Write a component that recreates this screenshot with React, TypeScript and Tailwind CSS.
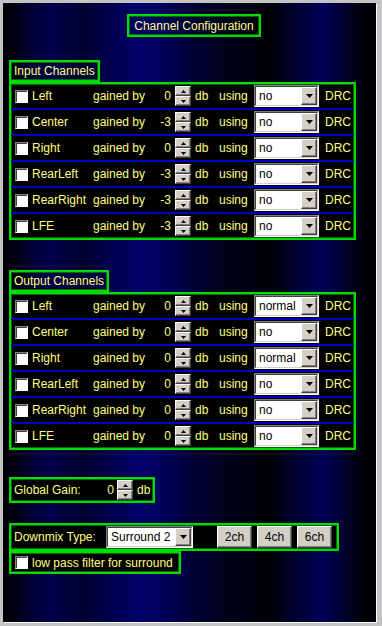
import React from "react";

const GREEN = "border-2 border-[#00dc00] shadow-[inset_0_0_0_1px_#006a00]";
const RAISED =
  "border border-t-white border-l-white border-r-[#404040] border-b-[#404040] bg-[#d4d0c8] shadow-[inset_-1px_-1px_0_#808080]";

function Checkbox() {
  return (
    <div className="w-[13px] h-[13px] shrink-0 border border-t-[#808080] border-l-[#808080] border-r-white border-b-white bg-white shadow-[inset_1px_1px_0_#404040]" />
  );
}

function DownTri() {
  return (
    <svg width="7" height="4" viewBox="0 0 7 4">
      <path d="M0 0h7L3.5 4z" fill="#000" />
    </svg>
  );
}

function Select({ value, w }: { value: string; w: string }) {
  return (
    <div
      className={`${w} h-[22px] shrink-0 border border-t-[#808080] border-l-[#808080] border-r-white border-b-white`}
    >
      <div className="w-full h-full border border-t-[#404040] border-l-[#404040] border-r-[#d4d0c8] border-b-[#d4d0c8] bg-white flex items-center">
        <span className="flex-1 pl-[3px] text-black text-[12px] leading-none">{value}</span>
        <div className={`w-[16px] h-full ${RAISED} flex items-center justify-center`}>
          <DownTri />
        </div>
      </div>
    </div>
  );
}

function Spinner() {
  return (
    <div className="w-[16px] h-[20px] shrink-0 flex flex-col">
      <div className={`h-[10px] ${RAISED} flex items-center justify-center`}>
        <svg width="5" height="3" viewBox="0 0 5 3">
          <path d="M2.5 0L5 3H0z" fill="#000" />
        </svg>
      </div>
      <div className={`h-[10px] ${RAISED} flex items-center justify-center`}>
        <svg width="5" height="3" viewBox="0 0 5 3">
          <path d="M0 0h5L2.5 3z" fill="#000" />
        </svg>
      </div>
    </div>
  );
}

type Row = { name: string; gain: string; mode: string };

function Group({ title, titleW, rows }: { title: string; titleW: string; rows: Row[] }) {
  return (
    <div className="flex flex-col">
      <div className={`${GREEN} ${titleW} h-[22px] flex items-center pl-[3px] bg-black/0`}>
        <span>{title}</span>
      </div>
      <div className={`${GREEN} w-[347px] bg-black`}>
        {rows.map((r, i) => (
          <React.Fragment key={r.name}>
            {i > 0 && <div className="h-[2px] bg-[#0000c8]" />}
            <div className="h-[24px] flex items-center">
              <div className="ml-[4px]">
                <Checkbox />
              </div>
              <span className="ml-[4px] w-[61px] whitespace-nowrap">{r.name}</span>
              <span className="w-[53px] whitespace-nowrap">gained by</span>
              <span className="w-[25px] text-right">{r.gain}</span>
              <div className="ml-[4px]">
                <Spinner />
              </div>
              <span className="ml-[4px] w-[24px]">db</span>
              <span className="w-[35px]">using</span>
              <Select value={r.mode} w="w-[65px]" />
              <span className="ml-[6px]">DRC</span>
            </div>
          </React.Fragment>
        ))}
      </div>
    </div>
  );
}

const inputRows: Row[] = [
  { name: "Left", gain: "0", mode: "no" },
  { name: "Center", gain: "-3", mode: "no" },
  { name: "Right", gain: "0", mode: "no" },
  { name: "RearLeft", gain: "-3", mode: "no" },
  { name: "RearRight", gain: "-3", mode: "no" },
  { name: "LFE", gain: "-3", mode: "no" },
];

const outputRows: Row[] = [
  { name: "Left", gain: "0", mode: "normal" },
  { name: "Center", gain: "0", mode: "no" },
  { name: "Right", gain: "0", mode: "normal" },
  { name: "RearLeft", gain: "0", mode: "no" },
  { name: "RearRight", gain: "0", mode: "no" },
  { name: "LFE", gain: "0", mode: "no" },
];

function Btn({ label }: { label: string }) {
  return (
    <div className={`w-[35px] h-[22px] ${RAISED} flex items-center justify-center text-black`}>
      {label}
    </div>
  );
}

export default function App() {
  return (
    <div className="w-[382px] h-[626px] bg-[#c4c4c4] pl-[3px] pt-[3px] font-['Liberation_Sans','Arial',sans-serif] text-[12px] leading-none text-[#ffff80]">
      <div className="w-[373px] h-[619px] shadow-[1px_1px_0_#ffffff] bg-[linear-gradient(to_right,#000006_0%,#000010_3%,#000038_8%,#00004c_13%,#000030_21%,#00004a_28%,#00006a_36%,#000058_44%,#000030_52%,#00001c_60%,#000006_72%,#000030_78%,#000058_86%,#000030_91%,#000006_97%)] flex flex-col pl-[6px]">
        <div className={`${GREEN} mt-[11px] ml-[118px] w-[134px] h-[23px] flex items-center justify-center`}>
          Channel Configuration
        </div>
        <div className="mt-[23px]">
          <Group title="Input Channels" titleW="w-[91px]" rows={inputRows} />
        </div>
        <div className="mt-[30px]">
          <Group title="Output Channels" titleW="w-[100px]" rows={outputRows} />
        </div>
        <div className={`${GREEN} mt-[27px] w-[146px] h-[26px] bg-black flex items-center pl-[3px]`}>
          <span className="w-[78px] whitespace-nowrap">Global Gain:</span>
          <span className="w-[22px] text-right">0</span>
          <div className="ml-[3px]">
            <Spinner />
          </div>
          <span className="ml-[4px]">db</span>
        </div>
        <div className={`${GREEN} mt-[20px] w-[330px] h-[28px] bg-black flex items-center pl-[3px]`}>
          <span className="w-[92px] whitespace-nowrap">Downmix Type:</span>
          <Select value="Surround 2" w="w-[87px]" />
          <div className="ml-[24px] flex gap-[5px]">
            <Btn label="2ch" />
            <Btn label="4ch" />
            <Btn label="6ch" />
          </div>
        </div>
        <div className={`${GREEN} w-[172px] h-[23px] bg-black flex items-center pl-[4px]`}>
          <Checkbox />
          <span className="ml-[4px] whitespace-nowrap">low pass filter for surround</span>
        </div>
      </div>
    </div>
  );
}
